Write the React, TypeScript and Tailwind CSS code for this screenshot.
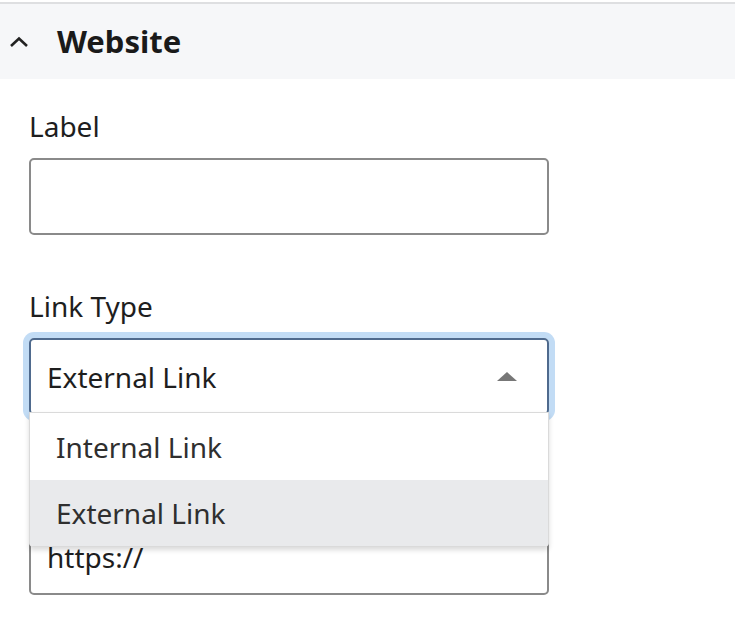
import React from "react";

function Field({ label, children }: { label: string; children: React.ReactNode }) {
  return (
    <div className="flex flex-col">
      <label className="text-[28px] leading-[40px] text-[#1e1e1e] mb-[12px]">{label}</label>
      {children}
    </div>
  );
}

export default function App() {
  return (
    <div className="w-[735px] h-[638px] bg-white font-['Noto_Sans',sans-serif] overflow-hidden">
      {/* Section header */}
      <div className="mt-[2px] h-[77px] border-t-2 border-[#dedfe1] bg-[#f6f7f9] flex items-center">
        <svg width="20" height="12" viewBox="0 0 20 12" className="ml-[9px] mt-[1px]">
          <polyline points="2,10 10,2.5 18,10" fill="none" stroke="#222" strokeWidth="2.6" />
        </svg>
        <h2 className="ml-[28px] text-[31px] font-bold text-[#1a1a1a] leading-none">Website</h2>
      </div>

      <div className="pl-[29px] pt-[27px] w-[549px] flex flex-col gap-[51px]">
        <Field label="Label">
          <div className="h-[77px] border-2 border-[#8a8a8a] rounded-[5px]" />
        </Field>

        <Field label="Link Type">
          <div className="relative">
            <div className="h-[77px] border-2 border-[#4f6a8d] rounded-[5px] ring-[6px] ring-[#c2dcf5] flex items-center justify-between pl-[16px] pr-[30px]">
              <span className="text-[28px] text-[#1e1e1e]">External Link</span>
              <span className="w-0 h-0 border-l-[10px] border-r-[10px] border-b-[9px] border-l-transparent border-r-transparent border-b-[#777]" />
            </div>
            <ul className="absolute z-10 left-0 right-0 top-[74px] bg-white border border-[#dadada] rounded-b-[4px] shadow-[0_3px_5px_rgba(0,0,0,0.15)] overflow-hidden">
              <li className="h-[67px] flex items-center pl-[26px] text-[28px] text-[#2f2f2f]">Internal Link</li>
              <li className="h-[66px] flex items-center pl-[26px] text-[28px] text-[#2f2f2f] bg-[#e9eaec]">External Link</li>
            </ul>
          </div>
        </Field>

        <Field label="URL">
          <div className="h-[77px] border-2 border-[#8a8a8a] rounded-[5px] flex items-center pl-[16px]">
            <span className="text-[28px] text-[#1e1e1e]">https://</span>
          </div>
        </Field>
      </div>
    </div>
  );
}
